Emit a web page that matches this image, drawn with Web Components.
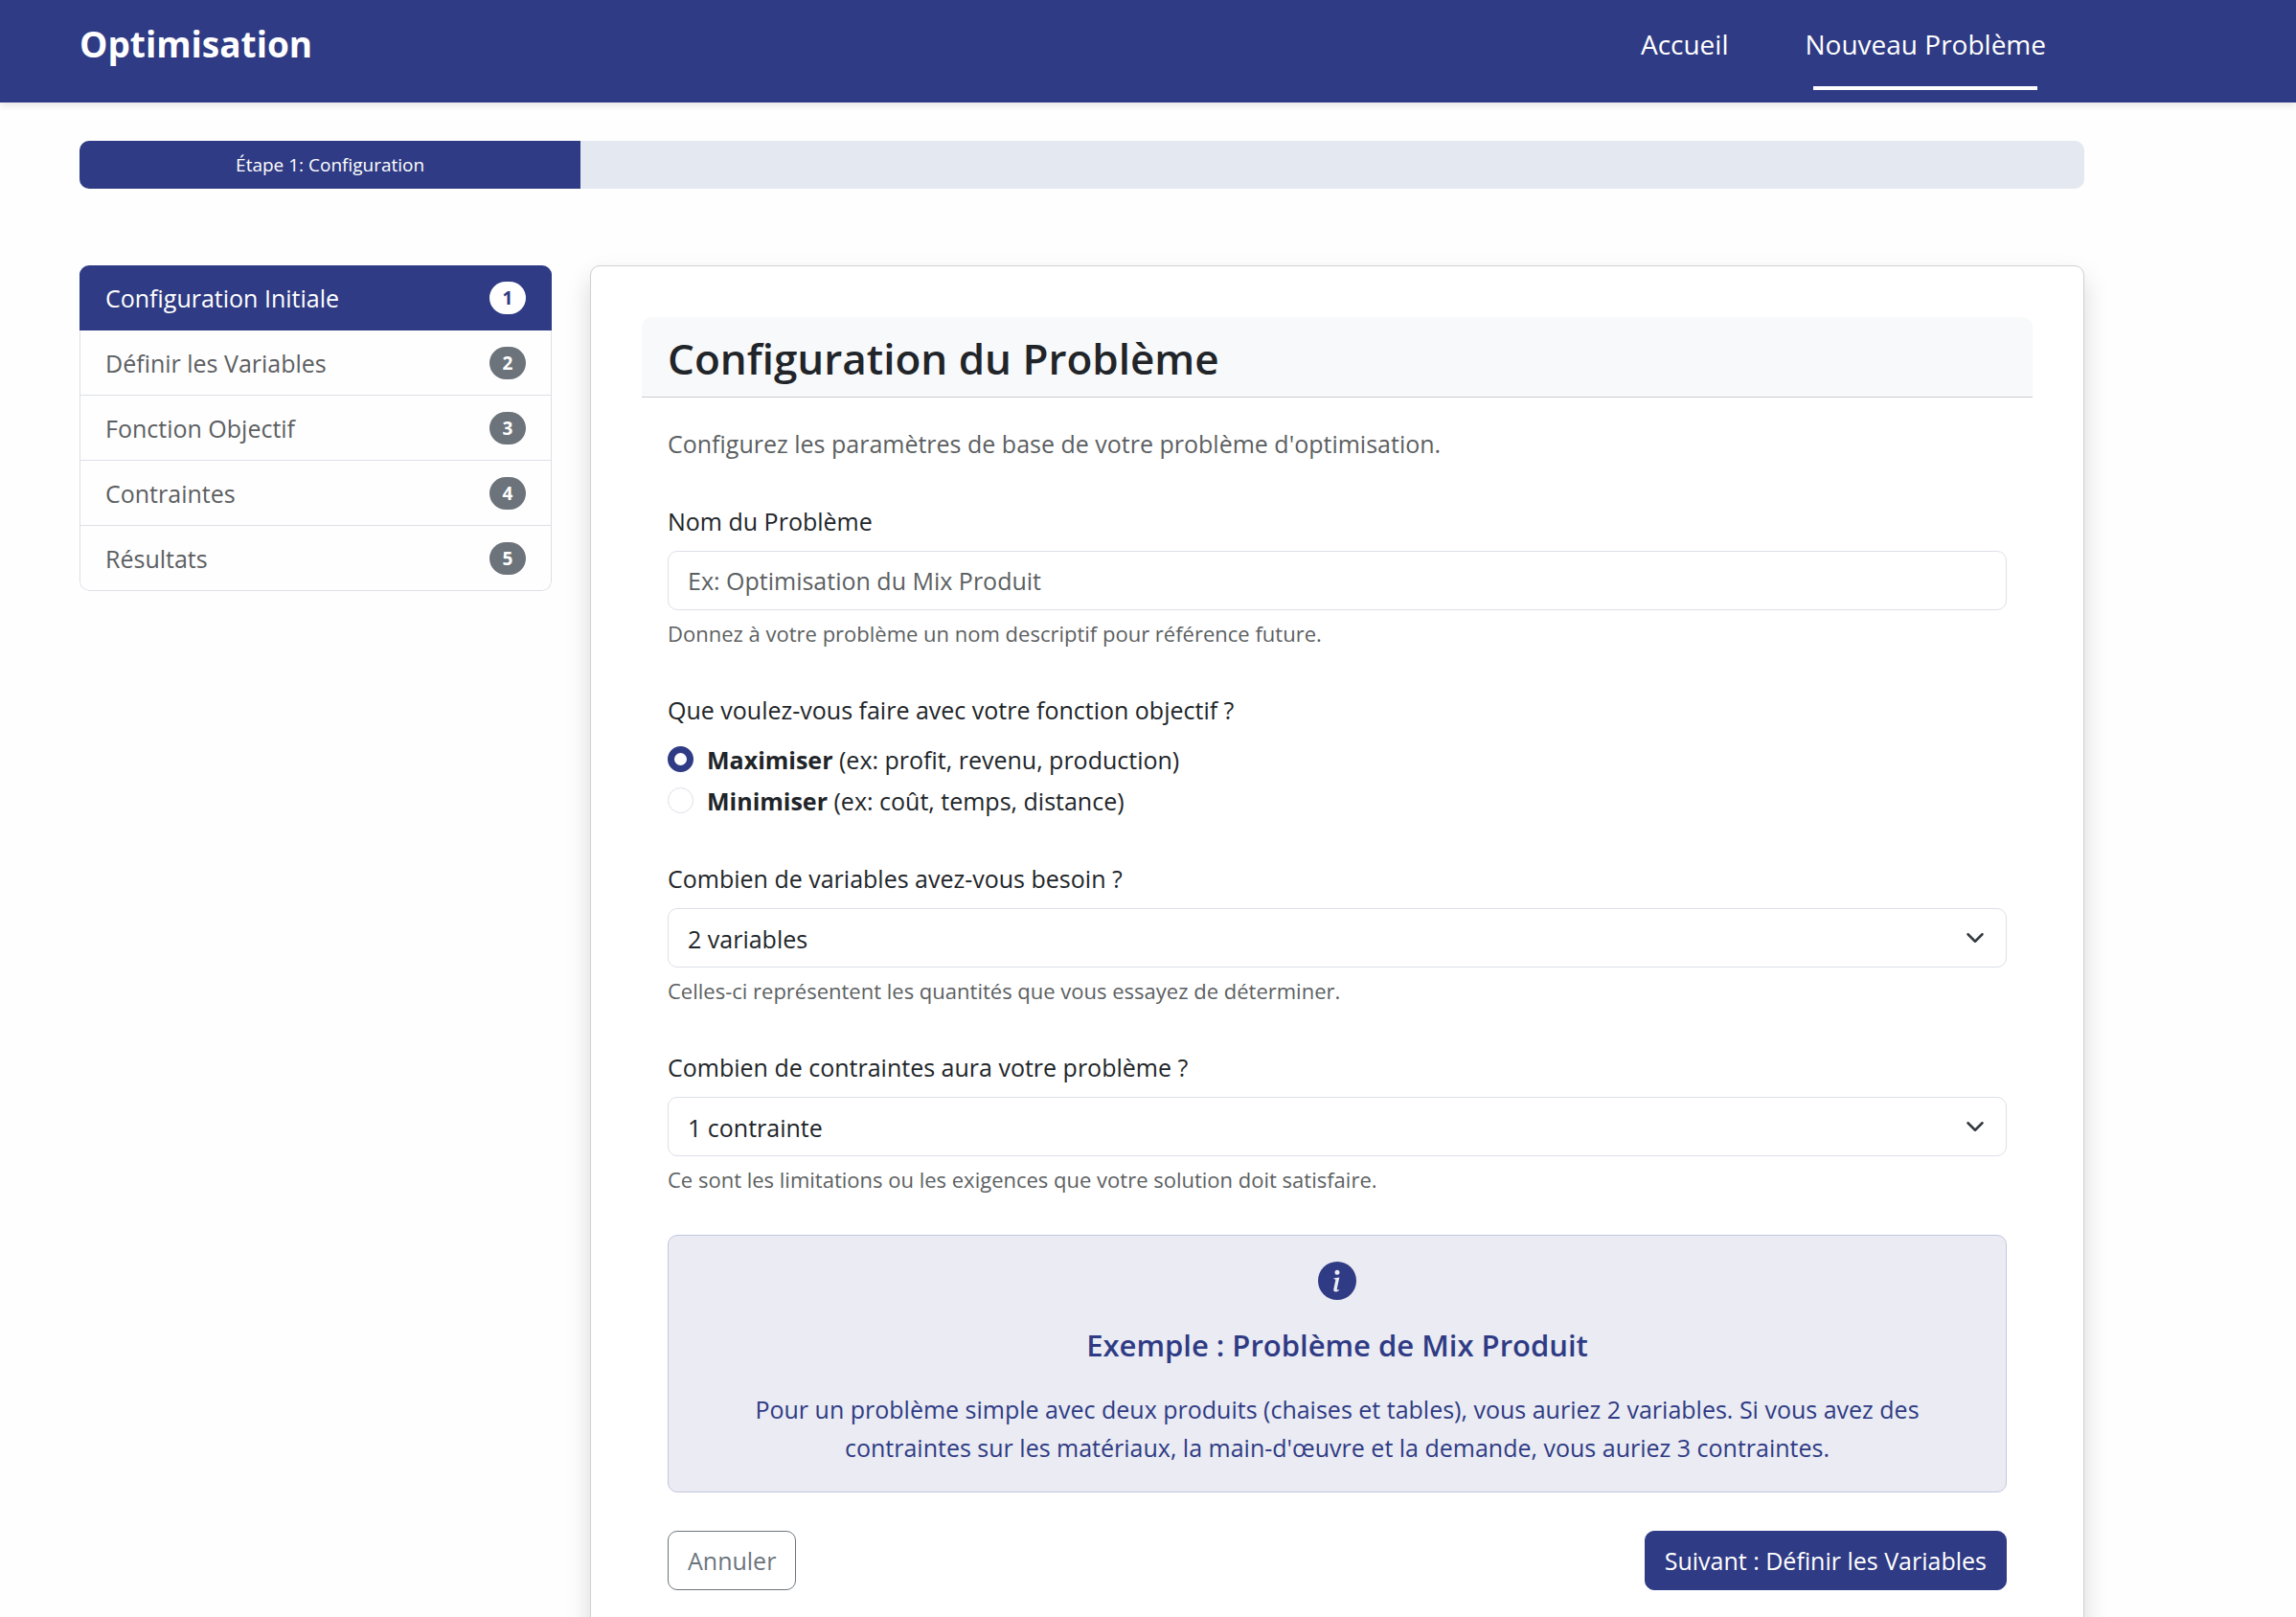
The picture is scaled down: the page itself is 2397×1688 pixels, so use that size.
<!DOCTYPE html>
<html lang="fr">
<head>
<meta charset="utf-8">
<meta name="viewport" content="width=device-width, initial-scale=1">
<title>Optimisation</title>
<style>
  :root {
    --brand: #2f3b84;
    --ink: #212529;
    --muted: #5c5f62;
    --line: #dee0e6;
    --inset-start: 83px;
    --inset-end: 221px;
  }
  body {
    margin: 0;
    background: #fefefe;
    color: var(--ink);
    font: 400 25px/40px "Open Sans", "Noto Sans", sans-serif;
  }
  main {
    display: flex;
    flex-direction: column;
    gap: 80px;
    padding: 40px var(--inset-end) 80px var(--inset-start);
  }
  .columns { display: flex; align-items: flex-start; gap: 40px; }
  .columns step-list { flex: 0 0 493px; }
  .columns form-card { flex: 1; min-width: 0; }
</style>
</head>
<body>
<app-navbar brand="Optimisation">
  <nav-link href="#accueil">Accueil</nav-link>
  <nav-link href="#nouveau" active>Nouveau Problème</nav-link>
</app-navbar>
<main>
  <step-progress value="25">Étape 1: Configuration</step-progress>
  <div class="columns">
    <step-list>
      <step-item number="1" active>Configuration Initiale</step-item>
      <step-item number="2">Définir les Variables</step-item>
      <step-item number="3">Fonction Objectif</step-item>
      <step-item number="4">Contraintes</step-item>
      <step-item number="5">Résultats</step-item>
    </step-list>
    <form-card heading="Configuration du Problème" intro="Configurez les paramètres de base de votre problème d'optimisation.">
      <text-field label="Nom du Problème" placeholder="Ex: Optimisation du Mix Produit" hint="Donnez à votre problème un nom descriptif pour référence future."></text-field>
      <goal-choice></goal-choice>
      <select-field label="Combien de variables avez-vous besoin ?" value="2 variables" hint="Celles-ci représentent les quantités que vous essayez de déterminer."></select-field>
      <select-field label="Combien de contraintes aura votre problème ?" value="1 contrainte" hint="Ce sont les limitations ou les exigences que votre solution doit satisfaire."></select-field>
      <info-callout heading="Exemple : Problème de Mix Produit">Pour un problème simple avec deux produits (chaises et tables), vous auriez 2 variables. Si vous avez des contraintes sur les matériaux, la main-d'œuvre et la demande, vous auriez 3 contraintes.</info-callout>
      <app-button slot="actions" variant="outline">Annuler</app-button>
      <app-button slot="actions">Suivant : Définir les Variables</app-button>
    </form-card>
  </div>
</main>
<script>
const define = (name, render) => customElements.define(name, class extends HTMLElement {
  connectedCallback() {
    if (this.shadowRoot) return;
    const root = this.attachShadow({ mode: "open" });
    root.innerHTML = "<style>*{box-sizing:border-box}:host{display:block;box-sizing:border-box}</style>" + render(this);
  }
});
const attr = (el, name) => (el.getAttribute(name) || "").replace(/&/g, "&amp;").replace(/"/g, "&quot;").replace(/</g, "&lt;");

const fieldCss = `
  label.title, legend { display: block; padding: 2px 0 0; margin-bottom: 11px; }
  .control {
    width: 100%; height: 62px; margin: 0; padding: 0 20px; display: block;
    border: 1px solid var(--line); border-radius: 10px; background: transparent;
    color: var(--ink); font: inherit; appearance: none;
  }
  .hint { margin: 7px 0 0; color: var(--muted); font-size: 22px; line-height: 35px; }
`;

define("app-navbar", el => `
  <style>
    :host { background: var(--brand); color: #fff; box-shadow: 0 3px 7px rgba(0,0,0,.1); }
    header { display: flex; justify-content: space-between; align-items: flex-start; padding: 13px calc(var(--inset-end) + 40px) 13px var(--inset-start); }
    a { color: inherit; text-decoration: none; font-size: 37px; font-weight: 700; line-height: 66px; }
    nav { display: flex; gap: 80px; }
  </style>
  <header><a href="#accueil">${attr(el, "brand")}</a><nav><slot></slot></nav></header>`);

define("nav-link", el => `
  <style>
    a { display: flex; flex-direction: column; justify-content: space-between; height: 81px; padding-top: 11px; color: #fff; text-decoration: none; font-size: 28px; line-height: 44px; }
    :host([active]) a::after { content: ""; height: 4px; margin: 0 9px; background: #fff; }
  </style>
  <a href="${attr(el, "href")}"><slot></slot></a>`);

define("step-progress", el => `
  <style>
    :host { background: #e4e8f0; border-radius: 10px; overflow: hidden; }
    div { width: ${attr(el, "value")}%; padding-top: 1px; background: var(--brand); color: #fff; font-size: 19px; line-height: 49px; text-align: center; }
  </style>
  <div role="progressbar" aria-valuenow="${attr(el, "value")}"><slot></slot></div>`);

define("step-list", () => `
  <style>:host { border-radius: 10px; overflow: hidden; }</style>
  <nav><slot></slot></nav>`);

define("step-item", el => `
  <style>
    :host { border: 1px solid var(--line); border-top: 0; }
    :host(:last-child) { border-radius: 0 0 10px 10px; }
    a { display: flex; align-items: center; justify-content: space-between; height: 67px; padding: 0 26px; color: var(--muted); text-decoration: none; }
    b { min-width: 38px; padding: 0 12px; border-radius: 17px; background: #6c737a; color: #fff; font-size: 19px; line-height: 34px; text-align: center; }
    :host([active]) { border-color: var(--brand); background: var(--brand); }
    :host([active]) a { color: #fff; }
    :host([active]) b { background: #fff; color: var(--brand); }
  </style>
  <a href="#etape-${attr(el, "number")}"><slot></slot><b>${attr(el, "number")}</b></a>`);

define("form-card", el => `
  <style>
    :host { padding: 53px; border: 1px solid #cfd0d1; border-radius: 10px; background: #fff; box-shadow: 0 13px 27px rgba(0,0,0,.15); }
    h2 { margin: 0; padding: 15px 27px 11px; border-bottom: 1px solid #c8cbcf; border-radius: 10px 10px 0 0; background: #f8f9fb; font-size: 44px; font-weight: 600; line-height: 57px; }
    form { display: flex; flex-direction: column; gap: 40px; padding: 27px; }
    p { margin: 0; padding-top: 2px; line-height: 38px; color: var(--muted); }
    .actions { display: flex; justify-content: space-between; }
  </style>
  <h2>${attr(el, "heading")}</h2>
  <form><p>${attr(el, "intro")}</p><slot></slot><div class="actions"><slot name="actions"></slot></div></form>`);

define("text-field", el => `
  <style>${fieldCss} .control::placeholder { color: var(--muted); opacity: 1; }</style>
  <label class="title" for="field">${attr(el, "label")}</label>
  <input class="control" id="field" type="text" placeholder="${attr(el, "placeholder")}">
  <p class="hint">${attr(el, "hint")}</p>`);

define("select-field", el => `
  <style>${fieldCss}
    .wrap { display: grid; align-items: center; }
    .wrap > * { grid-area: 1 / 1; }
    select.control { padding-top: 2px; }
    svg { justify-self: end; width: 20px; height: 20px; margin-right: 23px; pointer-events: none; }
  </style>
  <label class="title" for="field">${attr(el, "label")}</label>
  <div class="wrap">
    <select class="control" id="field"><option>${attr(el, "value")}</option></select>
    <svg viewBox="0 0 16 16" fill="none" stroke="#343a40" stroke-width="2" stroke-linecap="round" stroke-linejoin="round" aria-hidden="true"><path d="m2 5 6 6 6-6"/></svg>
  </div>
  <p class="hint">${attr(el, "hint")}</p>`);

define("goal-choice", () => `
  <style>${fieldCss}
    fieldset { margin: 0; padding: 0; border: 0; min-width: 0; }
    .options { display: flex; flex-direction: column; gap: 3px; }
    .options label { display: flex; align-items: center; gap: 14px; }
    .options span { padding-top: 2px; line-height: 38px; }
    input { width: 27px; height: 27px; margin: 0; border: 1px solid var(--line); border-radius: 50%; background: #fff; appearance: none; }
    input:checked { border: 7px solid var(--brand); }
  </style>
  <fieldset>
    <legend>Que voulez-vous faire avec votre fonction objectif ?</legend>
    <div class="options">
      <label><input type="radio" name="goal" value="max" checked><span><b>Maximiser</b> (ex: profit, revenu, production)</span></label>
      <label><input type="radio" name="goal" value="min"><span><b>Minimiser</b> (ex: coût, temps, distance)</span></label>
    </div>
  </fieldset>`);

define("info-callout", el => `
  <style>
    :host { display: flex; flex-direction: column; align-items: center; gap: 27px; padding: 27px 80px 26px; border: 1px solid #c3c7dd; border-radius: 10px; background: #eaebf3; color: var(--brand); text-align: center; }
    svg { width: 40px; height: 40px; }
    h3 { margin: 0; font-size: 31px; font-weight: 600; line-height: 40px; }
    p { margin: 0; }
  </style>
  <svg viewBox="0 0 16 16" fill="currentColor" aria-hidden="true"><path d="M8 16A8 8 0 1 0 8 0a8 8 0 0 0 0 16m.93-9.412-1 4.705c-.07.34.029.533.304.533.194 0 .487-.07.686-.246l-.088.416c-.287.346-.92.598-1.465.598-.703 0-1.002-.422-.808-1.319l.738-3.468c.064-.293.006-.399-.287-.47l-.451-.081.082-.381 2.29-.287zM8 5.5a1 1 0 1 1 0-2 1 1 0 0 1 0 2"/></svg>
  <h3>${attr(el, "heading")}</h3>
  <p><slot></slot></p>`);

define("app-button", () => `
  <style>
    button { display: block; height: 62px; margin: 0; padding: 0 20px; border: 1px solid var(--brand); border-radius: 10px; background: var(--brand); color: #fff; font: inherit; cursor: pointer; }
    :host([variant="outline"]) button { border-color: #6c757d; background: transparent; color: #6c757d; }
  </style>
  <button type="button"><slot></slot></button>`);
</script>
</body>
</html>
